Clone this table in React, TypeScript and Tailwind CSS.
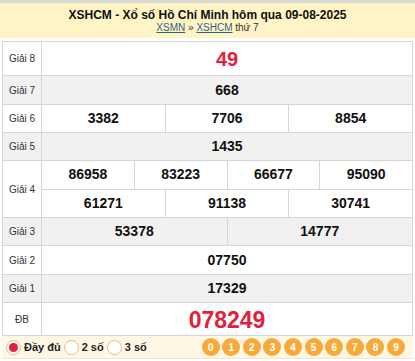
const rows: { label: string; nums: string[][]; h: string; gray?: boolean; big?: "g8" | "db" }[] = [
  { label: "Giải 8", nums: [["49"]], h: "h-[34px]", big: "g8" },
  { label: "Giải 7", nums: [["668"]], h: "h-[29px]", gray: true },
  { label: "Giải 6", nums: [["3382", "7706", "8854"]], h: "h-[28px]" },
  { label: "Giải 5", nums: [["1435"]], h: "h-[28px]", gray: true },
  { label: "Giải 4", nums: [["86958", "83223", "66677", "95090"], ["61271", "91138", "30741"]], h: "h-[57px]" },
  { label: "Giải 3", nums: [["53378", "14777"]], h: "h-[28px]", gray: true },
  { label: "Giải 2", nums: [["07750"]], h: "h-[29px]" },
  { label: "Giải 1", nums: [["17329"]], h: "h-[28px]", gray: true },
  { label: "ĐB", nums: [["078249"]], h: "h-[33px]", big: "db" },
];

function Radio({ checked, label }: { checked?: boolean; label: string }) {
  return (
    <div className="flex items-center gap-[3px]">
      <span className="w-[15px] h-[15px] rounded-full border border-[#e2c088] bg-white flex items-center justify-center">
        {checked && <span className="w-[9px] h-[9px] rounded-full bg-[#e3203a]" />}
      </span>
      <span className="text-[11px] font-bold text-[#222]">{label}</span>
    </div>
  );
}

export default function App() {
  return (
    <div className="w-[415px] h-[361px] bg-white overflow-hidden" style={{ fontFamily: '"Liberation Sans", Arial, sans-serif' }}>
      <div className="h-[3px] bg-[#d9d9d3]" />
      <div className="h-[35px] bg-[#fff4c6] flex flex-col items-center justify-center">
        <div className="text-[12px] font-bold text-[#111] leading-[14px]">XSHCM - Xổ số Hồ Chí Minh hôm qua 09-08-2025</div>
        <div className="text-[10px] text-[#333] leading-[12px]">
          <a className="underline text-[#2d6488]">XSMN</a> » <a className="underline text-[#2d6488]">XSHCM</a> thứ 7
        </div>
      </div>
      <div className="h-[3px]" />
      <div className="mx-[2px] border border-[#d6d6d6] border-b-0">
        {rows.map((r) => (
          <div key={r.label} className={`flex border-b border-[#d6d6d6] ${r.h} ${r.gray ? "bg-[#f1f1f1]" : "bg-white"}`}>
            <div className="w-[39px] shrink-0 border-r border-[#d6d6d6] flex items-center justify-center text-[10px] text-[#333]">
              {r.label}
            </div>
            <div className="flex-1 flex flex-col">
              {r.nums.map((line, i) => (
                <div key={i} className={`flex-1 flex ${i > 0 ? "border-t border-[#d6d6d6]" : ""}`}>
                  {line.map((n, j) => (
                    <div
                      key={n}
                      className={`flex-1 basis-0 flex items-center justify-center ${j > 0 ? "border-l border-[#d6d6d6]" : ""} ${
                        r.big === "g8"
                          ? "text-[20px] font-bold text-[#e3203a]"
                          : r.big === "db"
                          ? "text-[23px] font-bold text-[#e3203a]"
                          : "text-[14px] font-bold text-[#111]"
                      }`}
                    >
                      {n}
                    </div>
                  ))}
                </div>
              ))}
            </div>
          </div>
        ))}
      </div>
      <div className="mx-[2px] h-[23px] bg-[#fdf7e4] border-b border-[#f0e6c8] flex items-center pl-[4px] pr-[8px]">
        <div className="flex items-center gap-[3px]">
          <Radio checked label="Đầy đủ" />
          <Radio label="2 số" />
          <Radio label="3 số" />
        </div>
        <div className="ml-auto flex gap-[2.6px]">
          {["0", "1", "2", "3", "4", "5", "6", "7", "8", "9"].map((d) => (
            <span key={d} className="w-[18px] h-[18px] rounded-full bg-[#f7a93a] text-white text-[10px] font-bold flex items-center justify-center">
              {d}
            </span>
          ))}
        </div>
      </div>
    </div>
  );
}
